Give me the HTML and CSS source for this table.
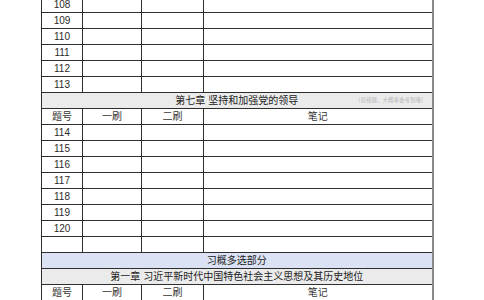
FILE: index.html
```html
<!DOCTYPE html>
<html lang="zh">
<head>
<meta charset="utf-8">
<link rel="stylesheet" href="styles.css">
</head>
<body>
<div class="page">
<table class="sheet">
  <colgroup>
    <col class="c-num"><col class="c-one"><col class="c-two"><col class="c-note">
  </colgroup>
  <tbody>
    <tr><td>108</td><td></td><td></td><td></td></tr>
    <tr><td>109</td><td></td><td></td><td></td></tr>
    <tr><td>110</td><td></td><td></td><td></td></tr>
    <tr><td>111</td><td></td><td></td><td></td></tr>
    <tr><td>112</td><td></td><td></td><td></td></tr>
    <tr><td>113</td><td></td><td></td><td></td></tr>
    <tr class="chapter"><td colspan="4"><div class="chap-cell"><span class="chap-title">第七章 坚持和加强党的领导</span><span class="chap-tip">（易错题，大概率会考到哦）</span></div></td></tr>
    <tr class="head"><td>题号</td><td>一刷</td><td>二刷</td><td>笔记</td></tr>
    <tr><td>114</td><td></td><td></td><td></td></tr>
    <tr><td>115</td><td></td><td></td><td></td></tr>
    <tr><td>116</td><td></td><td></td><td></td></tr>
    <tr><td>117</td><td></td><td></td><td></td></tr>
    <tr><td>118</td><td></td><td></td><td></td></tr>
    <tr><td>119</td><td></td><td></td><td></td></tr>
    <tr><td>120</td><td></td><td></td><td></td></tr>
    <tr><td></td><td></td><td></td><td></td></tr>
    <tr class="section"><td colspan="4">习概多选部分</td></tr>
    <tr class="chapter"><td colspan="4">第一章 习近平新时代中国特色社会主义思想及其历史地位</td></tr>
    <tr class="head"><td>题号</td><td>一刷</td><td>二刷</td><td>笔记</td></tr>
  </tbody>
</table>
</div>
</body>
</html>
```

FILE: styles.css
```css
html, body {
  margin: 0;
  padding: 0;
  background: #ffffff;
}

body {
  font-family: "Liberation Sans", "Noto Sans CJK SC", sans-serif;
  color: #2a2a2a;
  overflow: hidden;
}

.page {
  padding-left: 41px;
  margin-top: -4px;
}

.sheet {
  border-collapse: collapse;
  table-layout: fixed;
  width: 391px;
  border-right: 2px solid #8a8a8a;
}

.c-num { width: 41px; }
.c-one { width: 59px; }
.c-two { width: 62px; }
.c-note { width: 229px; }

.sheet td {
  border: 1px solid #2e2e2e;
  height: 15px;
  padding: 0;
  line-height: 15px;
  font-size: 10px;
  text-align: center;
  white-space: nowrap;
  overflow: hidden;
}

.sheet td:last-child {
  border-right: 2px solid #8a8a8a;
}

.chapter td {
  background: #ebebeb;
  color: #222222;
}

.section td {
  background: #dbe2f3;
  color: #222222;
}

.head td {
  color: #333333;
}

.chap-cell {
  position: relative;
  height: 15px;
}

.chap-tip {
  position: absolute;
  right: 5px;
  top: 0;
  font-size: 5.5px;
  color: #b5b5b5;
}
```
